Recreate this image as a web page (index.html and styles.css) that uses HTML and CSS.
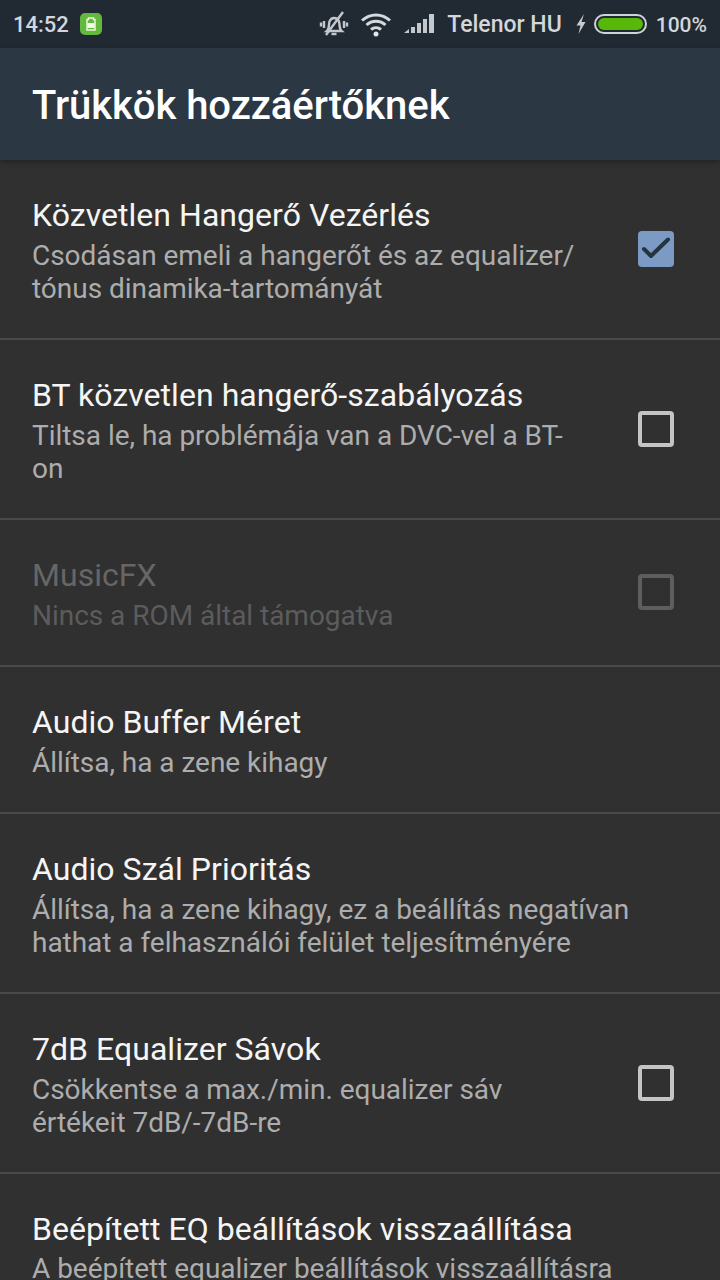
FILE: index.html
```
<!DOCTYPE html>
<html lang="hu">
<head>
<meta charset="utf-8">
<title>Trükkök hozzáértőknek</title>
<link rel="stylesheet" href="styles.css">
</head>
<body>
<div class="screen">
  <header class="status">
    <div class="status-left">
      <span class="clock">14:52</span>
      <svg class="sim" width="24" height="24" viewBox="0 0 24 24"><rect x="1" y="1" width="22" height="22" rx="5" fill="#63b83e"/><path d="M8 7.500h1.500V6h5v1.500H16V18H8z" fill="none" stroke="#eaf6e0" stroke-width="1.500"/><rect x="8.500" y="11" width="7" height="5" fill="#f2fbe9"/></svg>
    </div>
    <div class="status-right">
      <svg class="ic-vib" width="30" height="26" viewBox="0 0 30 26" fill="none" stroke="#c4c8cc" stroke-width="2.400"><path d="M8 20c2.500-2 1.500-6 2.500-9.500 1-2.500 3-3.500 4.500-3.500s4 1 5 3.500c1 3.500 0 7.500 2.500 9.500z"/><path d="M12.500 23h5"/><path d="M5 10v7M2 11.500v4M25 10v7M28 11.500v4"/><path d="M7 24 24 1"/></svg>
      <svg class="ic-wifi" width="32" height="25" viewBox="0 0 32 25" fill="none" stroke="#d6d9dc" stroke-width="3"><path d="M2 8.500c8-7.500 20-7.500 28 0"/><path d="M6.500 13c5.500-5 13.500-5 19 0"/><path d="M11 17.500c3-2.500 7-2.500 10 0"/><circle cx="16" cy="22" r="2.500" fill="#e4e6e8" stroke="none"/></svg>
      <svg class="ic-signal" width="32" height="22" viewBox="0 0 32 22" fill="#c4c8cc"><path d="M1 20 6 16v4zM8 14h4v6H8zM14 10h4v10h-4zM20 6h4v14h-4zM26 1h5v19h-5z"/></svg>
      <span class="carrier">Telenor HU</span>
      <svg class="ic-bolt" width="12" height="22" viewBox="0 0 12 22" fill="#c8ccd0"><path d="M9 1 1.500 12.500h4L3.500 21 10.500 9H6.500z"/></svg>
      <span class="battery"><span class="battery-fill"></span></span>
      <span class="percent">100%</span>
    </div>
  </header>
  <div class="appbar"><h1 class="appbar-title">Trükkök hozzáértőknek</h1></div>
  <main class="list">
    <section class="row row-tall">
      <div class="text"><div class="title">Közvetlen Hangerő Vezérlés</div><div class="sub">Csodásan emeli a hangerőt és az equalizer/<br>tónus dinamika-tartományát</div></div>
      <span class="box box-on"><svg width="36" height="36" viewBox="0 0 36 36" fill="none" stroke="#263340" stroke-width="4" stroke-linecap="round" stroke-linejoin="round"><path d="M6 18l7 7L30 8.500"/></svg></span>
    </section>
    <section class="row row-tall">
      <div class="text"><div class="title">BT közvetlen hangerő-szabályozás</div><div class="sub">Tiltsa le, ha problémája van a DVC-vel a BT-<br>on</div></div>
      <span class="box"></span>
    </section>
    <section class="row row-short row-disabled">
      <div class="text"><div class="title">MusicFX</div><div class="sub">Nincs a ROM által támogatva</div></div>
      <span class="box"></span>
    </section>
    <section class="row row-short">
      <div class="text"><div class="title">Audio Buffer Méret</div><div class="sub">Állítsa, ha a zene kihagy</div></div>
    </section>
    <section class="row row-tall">
      <div class="text"><div class="title">Audio Szál Prioritás</div><div class="sub">Állítsa, ha a zene kihagy, ez a beállítás negatívan<br>hathat a felhasználói felület teljesítményére</div></div>
    </section>
    <section class="row row-tall">
      <div class="text"><div class="title">7dB Equalizer Sávok</div><div class="sub">Csökkentse a max./min. equalizer sáv<br>értékeit 7dB/-7dB-re</div></div>
      <span class="box"></span>
    </section>
    <section class="row row-tall row-last">
      <div class="text"><div class="title">Beépített EQ beállítások visszaállítása</div><div class="sub">A beépített equalizer beállítások visszaállításra</div></div>
    </section>
  </main>
</div>
</body>
</html>
```
FILE: styles.css
```
html, body { margin: 0; padding: 0; background: #303030; }
.screen { width: 720px; height: 1280px; overflow: hidden; background: #303030; font-family: Roboto, "Noto Sans", sans-serif; display: flex; flex-direction: column; }
.status { height: 48px; flex: none; background: #212932; display: flex; justify-content: space-between; align-items: center; padding: 0 13px; box-sizing: border-box; color: #d3d6da; font-size: 22px; font-weight: 500; }
.status-left { display: flex; align-items: center; gap: 10px; }
.status-right { display: flex; align-items: center; }
.clock, .carrier, .percent { line-height: 46px; padding-top: 2px; }
.carrier { font-size: 23px; }
.percent { font-size: 21px; }
.ic-vib { margin-right: 11px; }
.ic-wifi { margin-right: 11px; }
.ic-signal { margin-right: 12px; }
.ic-bolt { margin-left: 13px; margin-right: 7px; }
.battery { width: 53px; height: 20px; box-sizing: border-box; border: 2px solid #cfd3d6; border-radius: 10px; padding: 2px; display: flex; margin-right: 9px; }
.battery-fill { flex: 1; background: #58b80a; border-radius: 6px; }
.appbar { height: 112px; flex: none; background: #2b3743; box-shadow: 0 2px 6px rgba(0,0,0,.3); position: relative; display: flex; align-items: center; padding: 2px 32px 0; box-sizing: border-box; }
.appbar-title { margin: 0; color: #fff; font-size: 40px; font-weight: 500; letter-spacing: -0.05px; }
.list { display: flex; flex-direction: column; }
.row { display: flex; align-items: center; justify-content: space-between; padding: 0 46px 0 32px; box-sizing: border-box; border-bottom: 2px solid #4a4a4a; }
.row-tall { height: 180px; }
.row-short { height: 147px; }
.row-last { border-bottom: 0; flex: none; align-items: flex-start; padding-top: 33px; }
.text { margin-top: 2px; }
.title { color: #f5f5f5; font-size: 32px; line-height: 40px; letter-spacing: 0.04px; }
.sub { color: #adadad; font-size: 28px; line-height: 33.500px; margin-top: 4px; white-space: nowrap; letter-spacing: -0.03px; }
.row-last .sub { margin-top: 3px; }
.row-disabled .title { color: #666; }
.row-disabled .sub { color: #5c5c5c; }
.box { width: 36px; height: 36px; flex: none; box-sizing: border-box; border: 4px solid #c4c4c4; border-radius: 4px; }
.box-on { background: #7b9bc4; border: 0; }
.box-on svg { display: block; }
.row-disabled .box { border-color: #5e5e5e; margin-bottom: 2px; }
```
